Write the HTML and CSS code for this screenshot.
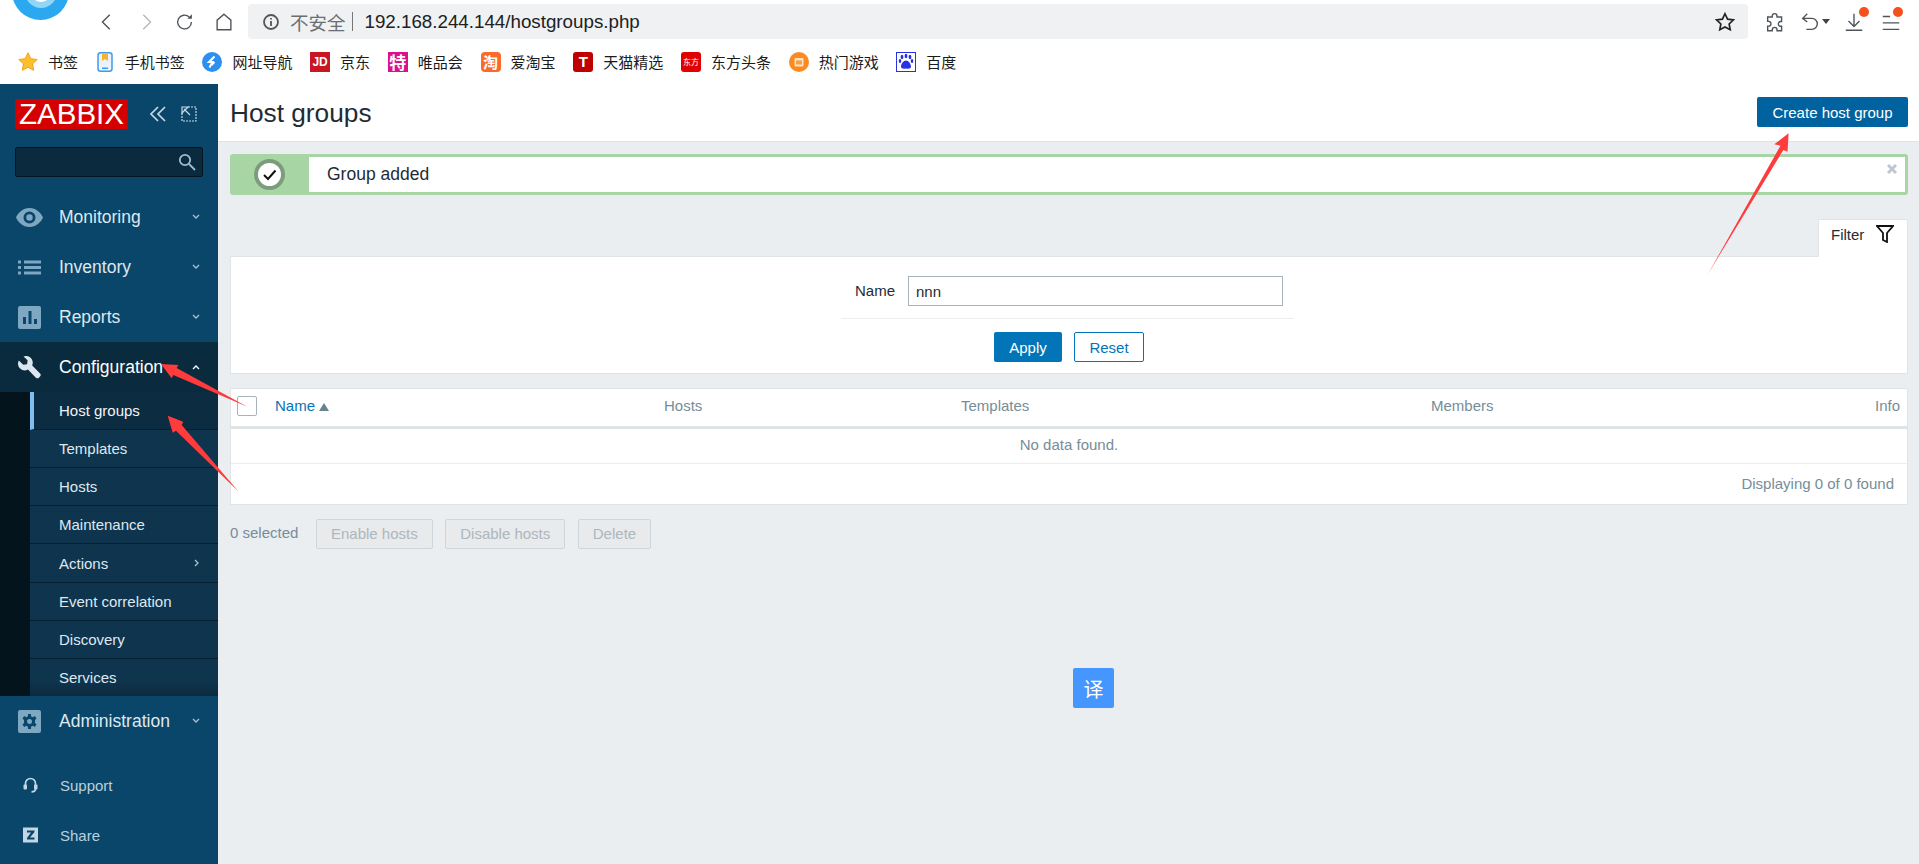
FILE: index.html
```html
<!DOCTYPE html>
<html lang="en">
<head>
<meta charset="utf-8">
<title>Host groups</title>
<link rel="stylesheet" href="styles.css">
</head>
<body>
<div class="logo-circle"><span class="logo-core"></span></div>
<header class="toolbar">
  <nav class="tb-nav">
    <svg class="tb-ico" viewBox="0 0 24 24"><path d="M15 4l-8 8 8 8" /></svg>
    <svg class="tb-ico tb-off" viewBox="0 0 24 24"><path d="M9 4l8 8-8 8" /></svg>
    <svg class="tb-ico" viewBox="0 0 24 24"><path d="M19 12a7.5 7.5 0 1 1-2.4-5.5" /><path class="solid" d="M19.5 3.5v5h-5z" /></svg>
    <svg class="tb-ico" viewBox="0 0 24 24"><path d="M12 3.5l7.5 6.5v10.5h-15V10z" /></svg>
  </nav>
  <div class="addr">
    <svg class="addr-info" viewBox="0 0 18 18"><circle cx="9" cy="9" r="7" /><path d="M9 8v5M9 5v1.6" /></svg>
    <span class="addr-warn">不安全</span>
    <span class="addr-sep"></span>
    <span class="addr-url">192.168.244.144/hostgroups.php</span>
    <svg class="addr-star" viewBox="0 0 24 24"><path d="M12 3l2.8 5.9 6.4.8-4.7 4.4 1.2 6.4L12 17.4l-5.7 3.1 1.2-6.4-4.7-4.4 6.4-.8z" /></svg>
  </div>
  <div class="tb-right">
    <svg class="tb-ico" viewBox="0 0 24 24"><path d="M9 6.5V5.5a2.6 2.6 0 0 1 5.2 0v1h5v5h-1a2.6 2.6 0 0 0 0 5.2h1v4.8h-5v-1a2.6 2.6 0 0 0-5.2 0v1H4v-5h1a2.6 2.6 0 0 0 0-5.2H4v-4.8z" /></svg>
    <span class="tb-undo">
      <svg class="tb-ico" viewBox="0 0 24 24"><path d="M9 3L4 8l5 4M4 8h10a6 6 0 0 1 0 12H8" /></svg>
      <span class="caret"></span>
    </span>
    <span class="tb-badge">
      <svg class="tb-ico" viewBox="0 0 24 24"><path d="M12 3v14M6 11l6 6 6-6M3 21h18" /></svg>
      <span class="dot"></span>
    </span>
    <span class="tb-badge tb-menu">
      <svg class="tb-ico" viewBox="0 0 24 24"><path d="M3 6h8M3 13h18M3 20h18" /></svg>
      <span class="dot dot-menu"></span>
    </span>
  </div>
</header>

<div class="bookmarks">
  <a class="bm">
    <svg class="bm-ico" viewBox="0 0 20 20"><path class="bm-star" d="M10 .8l2.8 5.9 6.4.8-4.7 4.4 1.2 6.4L10 15.2l-5.7 3.1 1.2-6.4L.8 7.5l6.4-.8z" /></svg>
    <span>书签</span>
  </a>
  <a class="bm bm-wide">
    <svg class="bm-ico bm-phone" viewBox="0 0 16 20"><rect x="1" y=".8" width="14" height="18.4" rx="2.5" fill="#e8f3fe" stroke="#3f9bf0" stroke-width="1.5" /><path d="M5 1h6v8L8 7l-3 2z" fill="#f5b335" /><rect x="5" y="15.5" width="6" height="1.5" fill="#3f9bf0" /></svg>
    <span>手机书签</span>
  </a>
  <a class="bm">
    <svg class="bm-ico" viewBox="0 0 20 20"><circle cx="10" cy="10" r="10" fill="#2d8ff0" /><path d="M12.5 4.5L7 10h3.5l-3 5.5M12.5 10l-3 3" stroke="#fff" stroke-width="2" fill="none" /></svg>
    <span>网址导航</span>
  </a>
  <a class="bm"><span class="bm-box bm-jd">JD</span><span>京东</span></a>
  <a class="bm"><span class="bm-box bm-vip">特</span><span>唯品会</span></a>
  <a class="bm"><span class="bm-box bm-tao">淘</span><span>爱淘宝</span></a>
  <a class="bm"><span class="bm-box bm-tm">T</span><span>天猫精选</span></a>
  <a class="bm"><span class="bm-box bm-df">东方</span><span>东方头条</span></a>
  <a class="bm">
    <svg class="bm-ico" viewBox="0 0 20 20"><circle cx="10" cy="10" r="10" fill="#fb8a20" /><rect x="5.5" y="6" width="9" height="8.5" rx="1" fill="#fde3c4" /><rect x="7" y="8.5" width="6" height="4" fill="#fb9d45" /></svg>
    <span>热门游戏</span>
  </a>
  <a class="bm">
    <svg class="bm-ico" viewBox="0 0 20 20"><rect x=".5" y=".5" width="19" height="19" fill="#fff" stroke="#2932e1" /><g fill="#2932e1"><ellipse cx="6" cy="5" rx="1.4" ry="2.2" /><ellipse cx="10" cy="4" rx="1.4" ry="2.2" /><ellipse cx="14" cy="5" rx="1.4" ry="2.2" /><ellipse cx="4" cy="9" rx="1.3" ry="2" /><ellipse cx="16" cy="9" rx="1.3" ry="2" /><path d="M10 8.5c2.5 0 5 3.5 5 6 0 2-2 2.500-5 2-3 .5-5 0-5-2 0-2.500 2.500-6 5-6z" /></g></svg>
    <span>百度</span>
  </a>
</div>

<div class="app">
  <aside class="sidebar">
    <div class="brand">
      <span class="logo">ZABBIX</span>
      <svg class="brand-ico" viewBox="0 0 18 16"><path d="M9 1L2 8l7 7M16 1L9 8l7 7" /></svg>
      <svg class="brand-ico brand-exp" viewBox="0 0 16 16"><path class="dash" d="M7 1h8v14H1V7" /><path d="M1 1h6L1 7zM3 3l6 6" /></svg>
    </div>
    <div class="search">
      <svg class="search-ico" viewBox="0 0 18 18"><circle cx="7" cy="7" r="5.2" /><path d="M11 11l6 6" /></svg>
    </div>
    <ul class="menu">
      <li class="m-item">
        <svg class="m-ico m-eye" viewBox="0 0 27 19"><path fill-rule="evenodd" d="M13.500 0C20 0 25 5 27 9.500 25 14 20 19 13.500 19S2 14 0 9.500C2 5 7 0 13.500 0zm0 3.500a6 6 0 1 0 0 12 6 6 0 0 0 0-12zm0 2.800a3.200 3.200 0 1 1 0 6.400 3.200 3.200 0 0 1 0-6.400z" /></svg>
        <span class="m-text">Monitoring</span>
        <svg class="chev" viewBox="0 0 8 6"><path d="M1 1l3 3 3-3" /></svg>
      </li>
      <li class="m-item">
        <svg class="m-ico" viewBox="0 0 23 14"><path d="M0 0h3v3H0zM6 0h17v3H6zM0 5.500h3v3H0zM6 5.500h17v3H6zM0 11h3v3H0zM6 11h17v3H6z" /></svg>
        <span class="m-text">Inventory</span>
        <svg class="chev" viewBox="0 0 8 6"><path d="M1 1l3 3 3-3" /></svg>
      </li>
      <li class="m-item">
        <svg class="m-ico" viewBox="0 0 23 23"><path fill-rule="evenodd" d="M2 0h19a2 2 0 0 1 2 2v19a2 2 0 0 1-2 2H2a2 2 0 0 1-2-2V2a2 2 0 0 1 2-2zm3 11v7h3v-7zm5.500-6v13h3V5zM16 13v5h3v-5z" /></svg>
        <span class="m-text">Reports</span>
        <svg class="chev" viewBox="0 0 8 6"><path d="M1 1l3 3 3-3" /></svg>
      </li>
      <li class="m-item m-open">
        <svg class="m-ico" viewBox="0 0 23 24"><path d="M8.500 0a7 7 0 0 1 5.800 9.800l8 8.200a2.500 2.500 0 0 1 0 3.600l-.8.800a2.500 2.500 0 0 1-3.600 0l-8-8.200A7 7 0 0 1 .4 4.800L5 9l4-.5.500-4L5.200 .6A7 7 0 0 1 8.500 0z" /></svg>
        <span class="m-text">Configuration</span>
        <svg class="chev" viewBox="0 0 8 6"><path d="M1 5l3-3 3 3" /></svg>
      </li>
      <li class="sub">
        <ul class="sub-list">
          <li class="s-item s-active">Host groups</li>
          <li class="s-item">Templates</li>
          <li class="s-item">Hosts</li>
          <li class="s-item">Maintenance</li>
          <li class="s-item s-tall">Actions<svg class="chev chev-r" viewBox="0 0 6 8"><path d="M1 1l3 3-3 3" /></svg></li>
          <li class="s-item">Event correlation</li>
          <li class="s-item">Discovery</li>
          <li class="s-item s-last">Services</li>
        </ul>
      </li>
      <li class="m-item">
        <svg class="m-ico" viewBox="0 0 23 23"><path fill-rule="evenodd" d="M2 0h19a2 2 0 0 1 2 2v19a2 2 0 0 1-2 2H2a2 2 0 0 1-2-2V2a2 2 0 0 1 2-2zm8 4v2.300L8 7.200 6.200 6 4.500 8.500 6 10v3l-1.500 1.500L6.200 17 8 15.800l2 .9V19h3v-2.300l2-.9L16.800 17l1.700-2.500L17 13v-3l1.500-1.500L16.800 6 15 7.200l-2-.9V4zm1.500 5a2.500 2.500 0 1 1 0 5 2.500 2.500 0 0 1 0-5z" /></svg>
        <span class="m-text">Administration</span>
        <svg class="chev" viewBox="0 0 8 6"><path d="M1 1l3 3 3-3" /></svg>
      </li>
    </ul>
    <ul class="foot">
      <li class="f-item">
        <svg class="f-ico" viewBox="0 0 14 16"><path class="f-line" d="M2 9V6.500a5 5 0 0 1 10 0V9" /><rect x="0" y="7.500" width="3.500" height="5" rx="1" /><rect x="10.500" y="7.500" width="3.500" height="5" rx="1" /><path class="f-line" d="M12 12c0 2-2 2.800-4 2.800" /></svg>
        <span>Support</span>
      </li>
      <li class="f-item">
        <svg class="f-ico" viewBox="0 0 15 15"><path fill-rule="evenodd" d="M0 0h15v15H0zm4 3v2h4L4 10.500V12h7.500v-2H7l4.500-5.500V3z" /></svg>
        <span>Share</span>
      </li>
    </ul>
  </aside>

  <main class="main">
    <div class="page-head">
      <h1 class="title">Host groups</h1>
      <button class="btn btn-create">Create host group</button>
    </div>
    <div class="content">
      <div class="msg">
        <div class="msg-side">
          <svg class="msg-ico" viewBox="0 0 31 31"><circle cx="15.500" cy="15.500" r="13.500" /><path d="M10 16l4 4 7.500-8.500" /></svg>
        </div>
        <div class="msg-body">Group added</div>
        <svg class="msg-close" viewBox="0 0 10 10"><path d="M1 1l8 8M9 1l-8 8" /></svg>
      </div>

      <div class="filter-tabs">
        <div class="filter-tab">
          <span>Filter</span>
          <svg class="funnel" viewBox="0 0 18 18"><path d="M1 1h16l-6 7v9l-4-2V8z" /></svg>
        </div>
      </div>
      <div class="filter">
        <div class="filter-row">
          <label class="filter-label">Name</label>
          <div class="filter-input">nnn</div>
        </div>
        <div class="filter-actions">
          <button class="btn btn-apply">Apply</button>
          <button class="btn btn-reset">Reset</button>
        </div>
      </div>

      <div class="list">
        <table class="grid">
          <colgroup>
            <col class="c-check"><col class="c-name"><col class="c-hosts"><col class="c-tpl"><col><col class="c-info">
          </colgroup>
          <thead>
            <tr>
              <th><span class="checkbox"></span></th>
              <th><a class="sort">Name</a><span class="tri"></span></th>
              <th>Hosts</th>
              <th>Templates</th>
              <th>Members</th>
              <th class="right">Info</th>
            </tr>
          </thead>
          <tbody>
            <tr><td class="nodata" colspan="6">No data found.</td></tr>
          </tbody>
        </table>
        <div class="paging">Displaying 0 of 0 found</div>
      </div>

      <div class="actions">
        <span class="sel">0 selected</span>
        <button class="btn btn-off">Enable hosts</button>
        <button class="btn btn-off">Disable hosts</button>
        <button class="btn btn-off">Delete</button>
      </div>
    </div>
  </main>
</div>

<button class="translate">译</button>

<svg class="notes" viewBox="0 0 1919 864">
  <polygon points="1708,274 1780.400,145.700 1774.300,144.300 1788.600,133.300 1787.500,151.700 1783.300,150" />
  <polygon points="247.300,406.700 173.300,375 171.700,378.300 161,364 178.300,365 176.700,368" />
  <polygon points="238.700,491.700 176,430.700 172.700,432.700 167.700,415.700 183.300,421.700 181.700,425" />
</svg>
</body>
</html>
```

FILE: styles.css
```css
* { box-sizing: border-box; }
html, body { margin: 0; height: 864px; overflow: hidden; }
body {
  width: 1919px;
  font-family: "Liberation Sans", Arial, "Noto Sans CJK SC", sans-serif;
  background: #fff;
  color: #1f2c33;
  display: flex;
  flex-direction: column;
}
ul { list-style: none; margin: 0; padding: 0; }
button { font-family: inherit; }

/* browser chrome */
.logo-circle {
  position: absolute;
  left: 12px;
  top: -37px;
  width: 57px;
  height: 57px;
  border-radius: 50%;
  background: #2ba8f0;
  display: flex;
  align-items: center;
  justify-content: center;
}
.logo-core {
  width: 32px;
  height: 32px;
  border-radius: 50%;
  background: #fff;
  border: 6px solid #8fd6f7;
}
.toolbar {
  height: 39px;
  padding-top: 4px;
  display: flex;
  align-items: stretch;
  flex: none;
}
.tb-nav {
  width: 248px;
  padding-left: 96px;
  display: flex;
  align-items: center;
  gap: 17px;
}
.tb-ico {
  width: 22px;
  height: 22px;
  flex: none;
  fill: none;
  stroke: #4f5459;
  stroke-width: 1.5;
}
.tb-ico .solid { fill: #4f5459; stroke: none; }
.tb-off { stroke: #b4b8bc; }
.addr {
  width: 1500px;
  height: 35px;
  background: #eff1f3;
  border-radius: 4px;
  display: flex;
  align-items: center;
  padding-left: 14px;
}
.addr-info {
  width: 18px;
  height: 18px;
  fill: none;
  stroke: #555;
  stroke-width: 1.8;
}
.addr-warn { margin-left: 10px; font-size: 18.500px; color: #6b6f73; font-family: "Noto Sans CJK SC", sans-serif; }
.addr-sep { width: 1px; height: 19px; background: #777; margin: 0 12px 0 6px; }
.addr-url { font-size: 18.750px; color: #202124; }
.addr-star {
  width: 22px;
  height: 22px;
  margin-left: auto;
  margin-right: 12px;
  fill: none;
  stroke: #222;
  stroke-width: 1.800;
}
.tb-right {
  flex: 1;
  display: flex;
  align-items: center;
  padding-left: 16px;
  gap: 13px;
}
.tb-undo { display: flex; align-items: center; gap: 1px; width: 31px; }
.caret {
  width: 0;
  height: 0;
  border: 4px solid transparent;
  border-top: 5px solid #444;
  border-bottom: 0;
}
.tb-badge { position: relative; display: flex; width: 22px; }
.tb-menu { margin-left: 2px; }
.dot {
  position: absolute;
  right: -4px;
  top: -4px;
  width: 10px;
  height: 10px;
  border-radius: 50%;
  background: #f4511e;
}
.dot-menu { right: -1px; }

.bookmarks {
  height: 45px;
  flex: none;
  display: flex;
  align-items: center;
  padding-left: 18px;
  gap: 17.700px;
  font-family: "Noto Sans CJK SC", sans-serif;
  font-size: 15px;
  color: #1b1b1b;
  background: #fff;
}
.bm { display: flex; align-items: center; gap: 10px; }
.bm-wide { gap: 12px; margin-left: 1px; }
.bm-ico { width: 20px; height: 20px; flex: none; }
.bm-phone { width: 16px; }
.bm-star { fill: #fbc02d; stroke: #f59f1a; }
.bm-box {
  width: 20px;
  height: 20px;
  flex: none;
  display: flex;
  align-items: center;
  justify-content: center;
  color: #fff;
  font-size: 13px;
  font-weight: 700;
  line-height: 1;
}
.bm-jd { background: #c81623; font-family: "Liberation Sans", sans-serif; font-size: 12px; }
.bm-vip { background: #d9128c; font-size: 17px; }
.bm-tao { background: #fb6a2a; border-radius: 4px; font-size: 15px; }
.bm-tm { background: #c00000; border-radius: 3px; font-family: "Liberation Sans", sans-serif; font-size: 15px; }
.bm-df { background: #e00000; border-radius: 3px; font-size: 8px; font-weight: 400; }

/* application */
.app { flex: 1; display: flex; min-height: 0; background: #ebeef1; }
.sidebar {
  width: 218px;
  flex: none;
  background: #0a466a;
  display: flex;
  flex-direction: column;
}
.brand {
  height: 63px;
  padding: 15px 0 0 15px;
  display: flex;
  align-items: flex-start;
}
.logo {
  width: 113px;
  height: 30px;
  background: #d40000;
  color: #fff;
  font-size: 29.500px;
  line-height: 30px;
  text-align: center;
}
.brand-ico {
  width: 18px;
  height: 16px;
  margin: 7px 0 0 21px;
  fill: none;
  stroke: #c7d9e6;
  stroke-width: 1.700;
}
.brand-exp { width: 16px; margin-left: 14px; stroke-width: 1.200; }
.brand-exp .dash { stroke-dasharray: 2 1; }
.search {
  width: 188px;
  height: 30px;
  margin-left: 15px;
  background: #0b2a3e;
  border: 1px solid #06151f;
  border-radius: 2px;
  display: flex;
  align-items: center;
  justify-content: flex-end;
  padding-right: 6px;
}
.search-ico {
  width: 18px;
  height: 18px;
  fill: none;
  stroke: #9dbcd0;
  stroke-width: 1.800;
}
.menu { margin-top: 15px; }
.m-item {
  height: 50px;
  display: flex;
  align-items: center;
  color: #dfe8ef;
  font-size: 17.500px;
  position: relative;
}
.m-ico {
  width: 23px;
  height: 23px;
  margin-left: 18px;
  margin-right: 18px;
  flex: none;
  fill: #7ea7c2;
}
.m-eye { width: 27px; height: 19px; margin-left: 16px; margin-right: 16px; }
.m-open { background: #0a2b3e; color: #fff; }
.m-open .m-ico { fill: #dce6ee; }
.chev {
  width: 8px;
  height: 6px;
  margin-left: auto;
  margin-right: 18px;
  flex: none;
  fill: none;
  stroke: #a9c2d3;
  stroke-width: 1.300;
}
.m-open .chev { stroke: #fff; }
.chev-r { width: 6px; height: 8px; }
.sub { background: #04141d; padding-left: 30px; }
.sub-list { background: #0f344e; }
.s-item {
  height: 38px;
  display: flex;
  align-items: center;
  padding-left: 29px;
  font-size: 15px;
  color: #dfe8ef;
  border-bottom: 1px solid #07202f;
}
.s-tall { height: 39px; }
.s-active {
  background: #0c2c42;
  border-left: 4px solid #7ebff0;
  padding-left: 25px;
  color: #f2f6f9;
}
.s-last { height: 37px; border-bottom: 0; background: linear-gradient(#0f344e 60%, #0c2a3e); }
.foot { margin-top: 14px; }
.f-item {
  height: 50px;
  display: flex;
  align-items: center;
  color: #b9d0df;
  font-size: 15px;
}
.f-ico {
  width: 15px;
  height: 16px;
  margin-left: 23px;
  margin-right: 22px;
  fill: #c2d6e3;
  flex: none;
}
.f-line { fill: none; stroke: #c2d6e3; stroke-width: 1.700; }

.main { flex: 1; min-width: 0; display: flex; flex-direction: column; }
.page-head {
  height: 58px;
  flex: none;
  background: #fff;
  border-bottom: 1px solid #dfe4e7;
  display: flex;
  align-items: flex-start;
  justify-content: space-between;
  padding: 13px 11px 0 12px;
}
.title {
  margin: 0;
  font-size: 26.250px;
  line-height: 32px;
  font-weight: 400;
  color: #1f2c33;
}
.btn {
  height: 30px;
  border-radius: 2px;
  border: 1px solid transparent;
  font-size: 15px;
  padding: 0;
  background: none;
}
.btn-create { width: 151px; background: #00639f; color: #fff; }
.content { padding: 12px 11px 0 12px; }
.msg {
  height: 41px;
  border: 3px solid #a8d5a4;
  border-radius: 3px;
  background: #fff;
  display: flex;
  position: relative;
}
.msg-side {
  width: 76px;
  background: #a8d5a4;
  display: flex;
  align-items: center;
  justify-content: center;
  padding-right: 3px;
}
.msg-ico { width: 31px; height: 31px; flex: none; }
.msg-ico circle { fill: #fff; stroke: #7d9c7d; stroke-width: 4; }
.msg-ico path { fill: none; stroke: #111; stroke-width: 2; }
.msg-body {
  padding-left: 18px;
  font-size: 17.500px;
  line-height: 35px;
  color: #1f2c33;
}
.msg-close {
  position: absolute;
  right: 8px;
  top: 7px;
  width: 10px;
  height: 10px;
  fill: none;
  stroke: #bfc8d0;
  stroke-width: 3;
}
.filter-tabs { display: flex; justify-content: flex-end; margin-top: 23px; }
.filter-tab {
  width: 90px;
  height: 38px;
  background: #fff;
  border: 1px solid #dfe4e7;
  border-bottom: 0;
  border-radius: 2px 2px 0 0;
  display: flex;
  align-items: center;
  padding-left: 12px;
  font-size: 15px;
  position: relative;
  top: 1px;
  padding-bottom: 9px;
}
.funnel {
  width: 18px;
  height: 18px;
  margin-left: 12px;
  fill: none;
  stroke: #111;
  stroke-width: 1.800;
}
.filter {
  height: 118px;
  background: #fff;
  border: 1px solid #dfe4e7;
}
.filter-row {
  width: 453px;
  height: 62px;
  margin-left: 610px;
  padding: 19px 0 0 14px;
  border-bottom: 1px solid #ebeef1;
  display: flex;
  align-items: flex-start;
  font-size: 15px;
}
.filter-label { line-height: 30px; width: 41px; margin-right: 12px; }
.filter-input {
  width: 375px;
  height: 30px;
  border: 1px solid #a7b4bc;
  padding-left: 7px;
  line-height: 29px;
}
.filter-actions {
  display: flex;
  justify-content: center;
  gap: 12px;
  margin-top: 13px;
}
.btn-apply { width: 68px; background: #0275b8; color: #fff; }
.btn-reset { width: 70px; border-color: #0275b8; color: #0275b8; background: #fff; }
.list {
  margin-top: 14px;
  background: #fff;
  border: 1px solid #dfe4e7;
  font-size: 15px;
  color: #768d99;
}
.grid { width: 100%; border-collapse: collapse; table-layout: fixed; }
.c-check { width: 37px; }
.c-name { width: 389px; }
.c-hosts { width: 297px; }
.c-tpl { width: 470px; }
.c-info { width: 100px; }
.grid th {
  height: 38px;
  padding: 0 7px 3px;
  font-weight: 400;
  text-align: left;
  border-bottom: 3px solid #dfe4e7;
  white-space: nowrap;
}
.grid th:first-child { padding-left: 6px; }
.grid th.right { text-align: right; }
.checkbox {
  display: block;
  width: 20px;
  height: 20px;
  border: 1px solid #a7b4bc;
  border-radius: 2px;
}
.sort { color: #0275b8; }
.tri {
  display: inline-block;
  margin-left: 4px;
  width: 0;
  height: 0;
  border: 5px solid transparent;
  border-bottom: 8px solid #698290;
  border-top: 0;
}
.nodata { height: 36px; text-align: center; padding: 0 0 2px; border-bottom: 1px solid #ebeef1; }
.paging { height: 40px; line-height: 40px; text-align: right; padding-right: 13px; }
.actions {
  display: flex;
  align-items: center;
  margin-top: 14px;
  font-size: 15px;
  color: #768d99;
}
.sel { width: 86px; padding-bottom: 2px; }
.btn-off {
  background: #e9eaeb;
  border-color: #cfd6db;
  color: #acb7be;
  margin-right: 12.500px;
  padding: 0 14px;
}

.translate {
  position: absolute;
  left: 1073px;
  top: 668px;
  width: 41px;
  height: 40px;
  border: 0;
  border-radius: 2px;
  background: #4696ff;
  color: #fff;
  font-size: 20px;
  font-family: "Noto Sans CJK SC", sans-serif;
  padding: 0;
}
.notes {
  position: absolute;
  left: 0;
  top: 0;
  width: 1919px;
  height: 864px;
  pointer-events: none;
  fill: #ff3b3b;
}
```
